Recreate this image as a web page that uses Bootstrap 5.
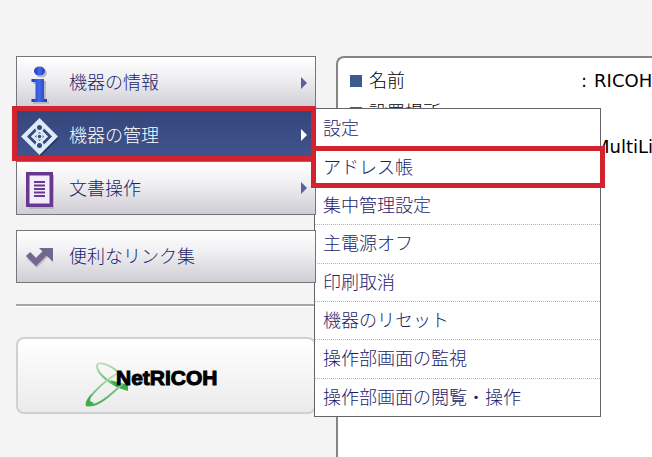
<!DOCTYPE html>
<html lang="ja">
<head>
<meta charset="utf-8">
<meta name="viewport" content="width=device-width, initial-scale=1">
<title>Web Image Monitor</title>
<link href="https://cdn.jsdelivr.net/npm/bootstrap@5.3.0/dist/css/bootstrap.min.css" rel="stylesheet">
<style>
body{background:#f4f4f4;color:#000;font-family:"DejaVu Sans","Noto Sans CJK JP",sans-serif;font-size:18px;line-height:24px}
.page{padding:56px 0 0 16px;gap:20px;height:100vh}
.sidebar{flex:0 0 300px}
.jp{font-family:"Noto Sans CJK JP",sans-serif;font-weight:300}
.menu-link{z-index:3;height:53px;padding:0 8px 0 5px;gap:9px;border:1px solid #77757c;border-top-width:0;color:#1d1d6b;background:linear-gradient(#fff,#f0f0f3 40%,#cfcdd4)}
.menu-link.first{border-top-width:1px}
.menu-link span,.submenu a{padding-bottom:3px}
.menu-link svg.pic{flex:0 0 38px}
.menu-link.on{color:#fff;background:linear-gradient(#34457a,#42558f)}
.menu-link.on::after{content:"";position:absolute;inset:-3px -1px 0 -5px;border:5px solid #d2232f}
.group-two{margin-top:15px}
.submenu{position:absolute;left:298px;top:-1px;width:287px;height:309px;display:grid;grid-template-rows:repeat(8,1fr);background:#fff;border:1px solid #66646b}
.submenu li+li{border-top:1px dotted #b4b4b4}
.submenu a{color:#1d1d6b;padding-left:8px;height:100%}
.submenu .picked::after{content:"";position:absolute;z-index:4;inset:-2px -5px -2px -4px;border:5px solid #d2232f;pointer-events:none}
.rule{height:3px;margin:21px 0 30px;background:#a6a6a6;border-bottom:1px solid #fff}
.shop{height:77px;border:2px solid #d0d0d0;border-radius:8px;background:linear-gradient(#fff,#ebebeb)}
.shop text{font-family:"Liberation Sans Narrow","Liberation Sans",sans-serif;font-weight:700;font-size:21px}
.panel{min-width:0;border:2px solid #858585;border-width:2px 0 0 2px;border-radius:8px 0 0 0;background:#fff;padding:7px 0 0 12px}
.info{display:grid;grid-template-columns:231px max-content;grid-template-rows:32px 32px 36px}
.info dt{font-weight:300;gap:7px}
.info dt b{font-weight:300;padding-bottom:4px}
.info dd{gap:7px}
.sq{width:12px;height:12px;background:#3b5b8c}
</style>
<script src="https://cdn.jsdelivr.net/npm/bootstrap@5.3.0/dist/js/bootstrap.bundle.min.js"></script>
</head>
<body class="overflow-hidden">
<div class="page d-flex">
<nav class="sidebar">
<ul class="list-unstyled m-0 jp">
<li><a href="#" class="menu-link first position-relative d-flex align-items-center text-decoration-none">
<svg class="pic" width="38" height="44" viewBox="0 0 38 44" aria-hidden="true"><defs><linearGradient id="b"><stop stop-color="#2337c5"/><stop offset=".5" stop-color="#4468ea"/><stop offset="1" stop-color="#2238b4"/></linearGradient></defs><g fill="#bbb9c4" transform="translate(2 2)"><ellipse cx="17.500" cy="10" rx="5.500" ry="4.500"/><path d="M9 18h13v20h3v3H9v-3h4V21H9z"/></g><g fill="url(#b)"><ellipse cx="17.500" cy="10" rx="5.500" ry="4.500"/><path d="M9.500 18H22v20h3v3H9.500v-3h4V21h-4z"/></g></svg>
<span class="flex-grow-1">機器の情報</span><svg width="6" height="12" aria-hidden="true"><path d="M0 0l6 6-6 6z" fill="#5461a5"/></svg></a></li>
<li class="position-relative"><a href="#" class="menu-link on position-relative d-flex align-items-center text-decoration-none" aria-expanded="true">
<svg class="pic overflow-visible" width="38" height="44" viewBox="0 0 38 44" aria-hidden="true"><path d="M19 7l18 18-18 18L1 25z" fill="#253461"/><path d="M17.500 5L36 23.500 17.500 42-1 23.500z" fill="#dceafa"/><path d="M17.500 11L30 23.500 17.500 36 5 23.500z" fill="#354878"/><path d="M17.500 17l6.500 6.500-6.500 6.500-6.500-6.500z" fill="#354878" stroke="#dceafa" stroke-width="3"/><g fill="#354878" stroke="#dceafa" stroke-width="2"><circle cx="17.500" cy="14.500" r="3.500"/><circle cx="17.500" cy="32.500" r="3.500"/></g><circle cx="17.500" cy="23.500" r="2.500" fill="#354878" stroke="#dceafa" stroke-width="1.500"/></svg>
<span class="flex-grow-1">機器の管理</span><svg width="6" height="12" aria-hidden="true"><path d="M0 0l6 6-6 6z" fill="#fff"/></svg></a>
<ul class="submenu list-unstyled m-0">
<li><a href="#" class="d-flex align-items-center text-decoration-none">設定</a></li>
<li class="picked position-relative"><a href="#" class="d-flex align-items-center text-decoration-none">アドレス帳</a></li>
<li><a href="#" class="d-flex align-items-center text-decoration-none">集中管理設定</a></li>
<li><a href="#" class="d-flex align-items-center text-decoration-none">主電源オフ</a></li>
<li><a href="#" class="d-flex align-items-center text-decoration-none">印刷取消</a></li>
<li><a href="#" class="d-flex align-items-center text-decoration-none">機器のリセット</a></li>
<li><a href="#" class="d-flex align-items-center text-decoration-none">操作部画面の監視</a></li>
<li><a href="#" class="d-flex align-items-center text-decoration-none">操作部画面の閲覧・操作</a></li>
</ul></li>
<li><a href="#" class="menu-link position-relative d-flex align-items-center text-decoration-none">
<svg class="pic" width="38" height="44" viewBox="0 0 38 44" aria-hidden="true"><path d="M7 9h25v34H7z" fill="#b9b3c4"/><path d="M4 6h27v35H4z" fill="#68388f"/><path d="M7.500 9.500h20v28h-20z" fill="#f3edfb"/><path d="M12 16h11M12 19.500h11M12 23h11M12 26.500h11M12 30h11" stroke="#68388f" stroke-width="1.800"/></svg>
<span class="flex-grow-1">文書操作</span><svg width="6" height="12" aria-hidden="true"><path d="M0 0l6 6-6 6z" fill="#5461a5"/></svg></a></li>
<li class="group-two"><a href="#" class="menu-link first position-relative d-flex align-items-center text-decoration-none">
<svg class="pic" width="38" height="44" viewBox="0 0 38 44" aria-hidden="true"><path d="M6 21l8 7 12-12" transform="translate(1 1)" fill="none" stroke="#c3c0ca" stroke-width="6"/><path d="M6 19l8 8 11-11" fill="none" stroke="#73678f" stroke-width="6"/><path d="M17 13h14v14z" fill="#73678f"/></svg>
<span class="flex-grow-1">便利なリンク集</span></a></li>
</ul>
<div class="rule"></div>
<a href="#" class="shop d-block" aria-label="NetRICOH"><svg class="d-block" width="296" height="72" viewBox="0 0 296 72"><defs><linearGradient id="g" x1="0" y1="0" x2="0" y2="1"><stop stop-color="#c4ddc4"/><stop offset="1" stop-color="#3daf47"/></linearGradient></defs><path d="M100 33C90 24 79 22 79 27c0 8 16 21 30 23" fill="none" stroke="url(#g)" stroke-width="2"/><path d="M92 41l6 7 12 4V46z" fill="#3daf47"/><path d="M100 34C84 43 64 64 70 66c9 3 24-11 34-21" fill="none" stroke="url(#g)" stroke-width="2"/><path d="M73 55c-7 9-7 14-1 12l4-3-4-2z" fill="#3daf47"/><text x="98" y="46" stroke="#000" stroke-width="1">NetRICOH</text></svg></a>
</nav>
<main class="panel flex-grow-1 overflow-hidden">
<dl class="info m-0 text-nowrap">
<dt class="jp d-flex align-items-center"><span class="sq"></span><b>名前</b></dt><dd class="m-0 d-flex align-items-center"><span>:</span><span>RICOH</span></dd>
<dt class="jp d-flex align-items-center"><span class="sq"></span><b>設置場所</b></dt><dd class="m-0"></dd>
<dt></dt><dd class="m-0 d-flex align-items-center"><span>:</span><span>MultiLi</span></dd>
</dl>
</main>
</div>
</body>
</html>
